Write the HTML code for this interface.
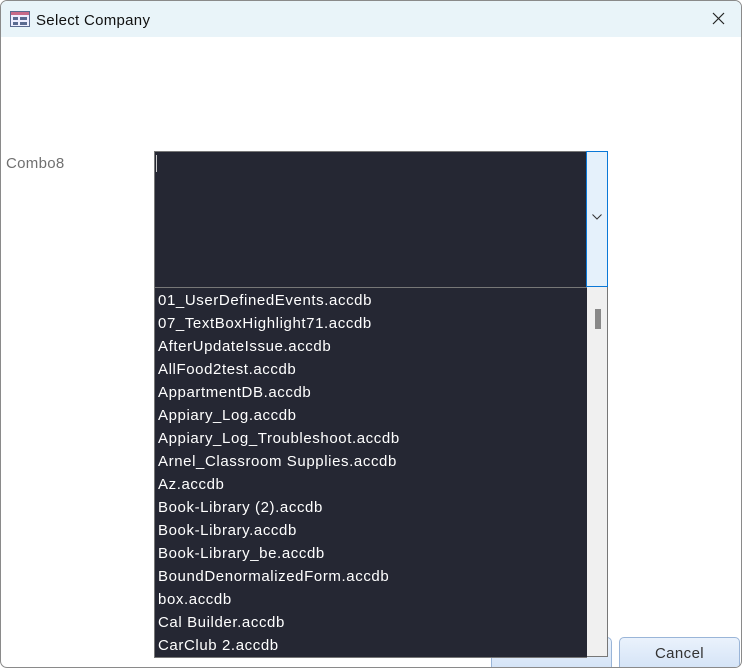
<!DOCTYPE html>
<html><head><style>
body{margin:0;width:742px;height:668px;position:relative;overflow:hidden;background:#fff;font-family:"Liberation Sans",sans-serif}
.win{position:absolute;left:0;top:0;width:740px;height:666px;border:1px solid #8a8a8a;border-radius:7px;overflow:hidden;background:#fff}
.title{position:absolute;left:0;top:0;width:740px;height:36px;background:#e9f4f9}
.title span{position:absolute;left:35px;top:11px;font-size:15px;letter-spacing:0.3px;color:#111}
.lbl{position:absolute;left:5px;top:154px;font-size:15px;letter-spacing:0.3px;color:#707070}
.combo{position:absolute;left:153px;top:150px;width:432px;height:135px;background:#252733;border:1px solid #777;border-right:none}
.btn{position:absolute;left:585px;top:150px;width:20px;height:134px;background:#e5f1fb;border:1px solid #0a78d7}
.list{position:absolute;left:153px;top:286px;width:432px;height:368px;background:#252733;border:1px solid #777;border-right:none;padding-top:1px;box-sizing:content-box}
.sb{position:absolute;left:586px;top:286px;width:20px;height:369px;background:#f0f0f0;border-right:1px solid #777;border-bottom:1px solid #777}
.thumb{position:absolute;left:8px;top:22px;width:6px;height:20px;background:#888}
.list div{height:23px;line-height:23px;padding-left:3px;color:#fff;font-size:15px;letter-spacing:0.6px}
.b{position:absolute;top:636px;width:119px;height:34px;border:1px solid #9ab5d8;border-radius:5px;background:linear-gradient(#eaf2fc,#d2e2f6);font-size:15px;color:#333;text-align:center;line-height:31px;letter-spacing:0.4px}
</style></head><body>
<div class="win">
<div class="title">
<svg style="position:absolute;left:9px;top:10px" width="20" height="16"><rect x="0.5" y="0.5" width="19" height="15" fill="#eef" stroke="#5a6a90"/><rect x="1" y="1" width="18" height="3" fill="#c86a88"/><rect x="3" y="6" width="5" height="3" fill="#5a6a90"/><rect x="10" y="6" width="7" height="3" fill="#5a6a90"/><rect x="3" y="11" width="5" height="3" fill="#5a6a90"/><rect x="10" y="11" width="7" height="3" fill="#5a6a90"/></svg>
<span>Select Company</span>
<svg style="position:absolute;left:711px;top:11px" width="13" height="13"><path d="M1 1L12 12M12 1L1 12" stroke="#222" stroke-width="1.2"/></svg>
</div>
<div class="lbl">Combo8</div>
<div class="combo"><div style="position:absolute;left:1px;top:3px;width:1px;height:17px;background:#ccc"></div></div>
<div class="btn"><svg style="position:absolute;left:5px;top:62px" width="10" height="6"><path d="M0.5 0.5L5 5L9.5 0.5" fill="none" stroke="#333"/></svg></div>
<div class="b" style="left:490px">OK</div>
<div class="b" style="left:618px">Cancel</div>
<div class="list">
<div>01_UserDefinedEvents.accdb</div><div>07_TextBoxHighlight71.accdb</div><div>AfterUpdateIssue.accdb</div><div>AllFood2test.accdb</div><div>AppartmentDB.accdb</div><div>Appiary_Log.accdb</div><div>Appiary_Log_Troubleshoot.accdb</div><div>Arnel_Classroom Supplies.accdb</div><div>Az.accdb</div><div>Book-Library (2).accdb</div><div>Book-Library.accdb</div><div>Book-Library_be.accdb</div><div>BoundDenormalizedForm.accdb</div><div>box.accdb</div><div>Cal Builder.accdb</div><div>CarClub 2.accdb</div>
</div>
<div class="sb"><div class="thumb"></div></div>
</div>
</body></html>
